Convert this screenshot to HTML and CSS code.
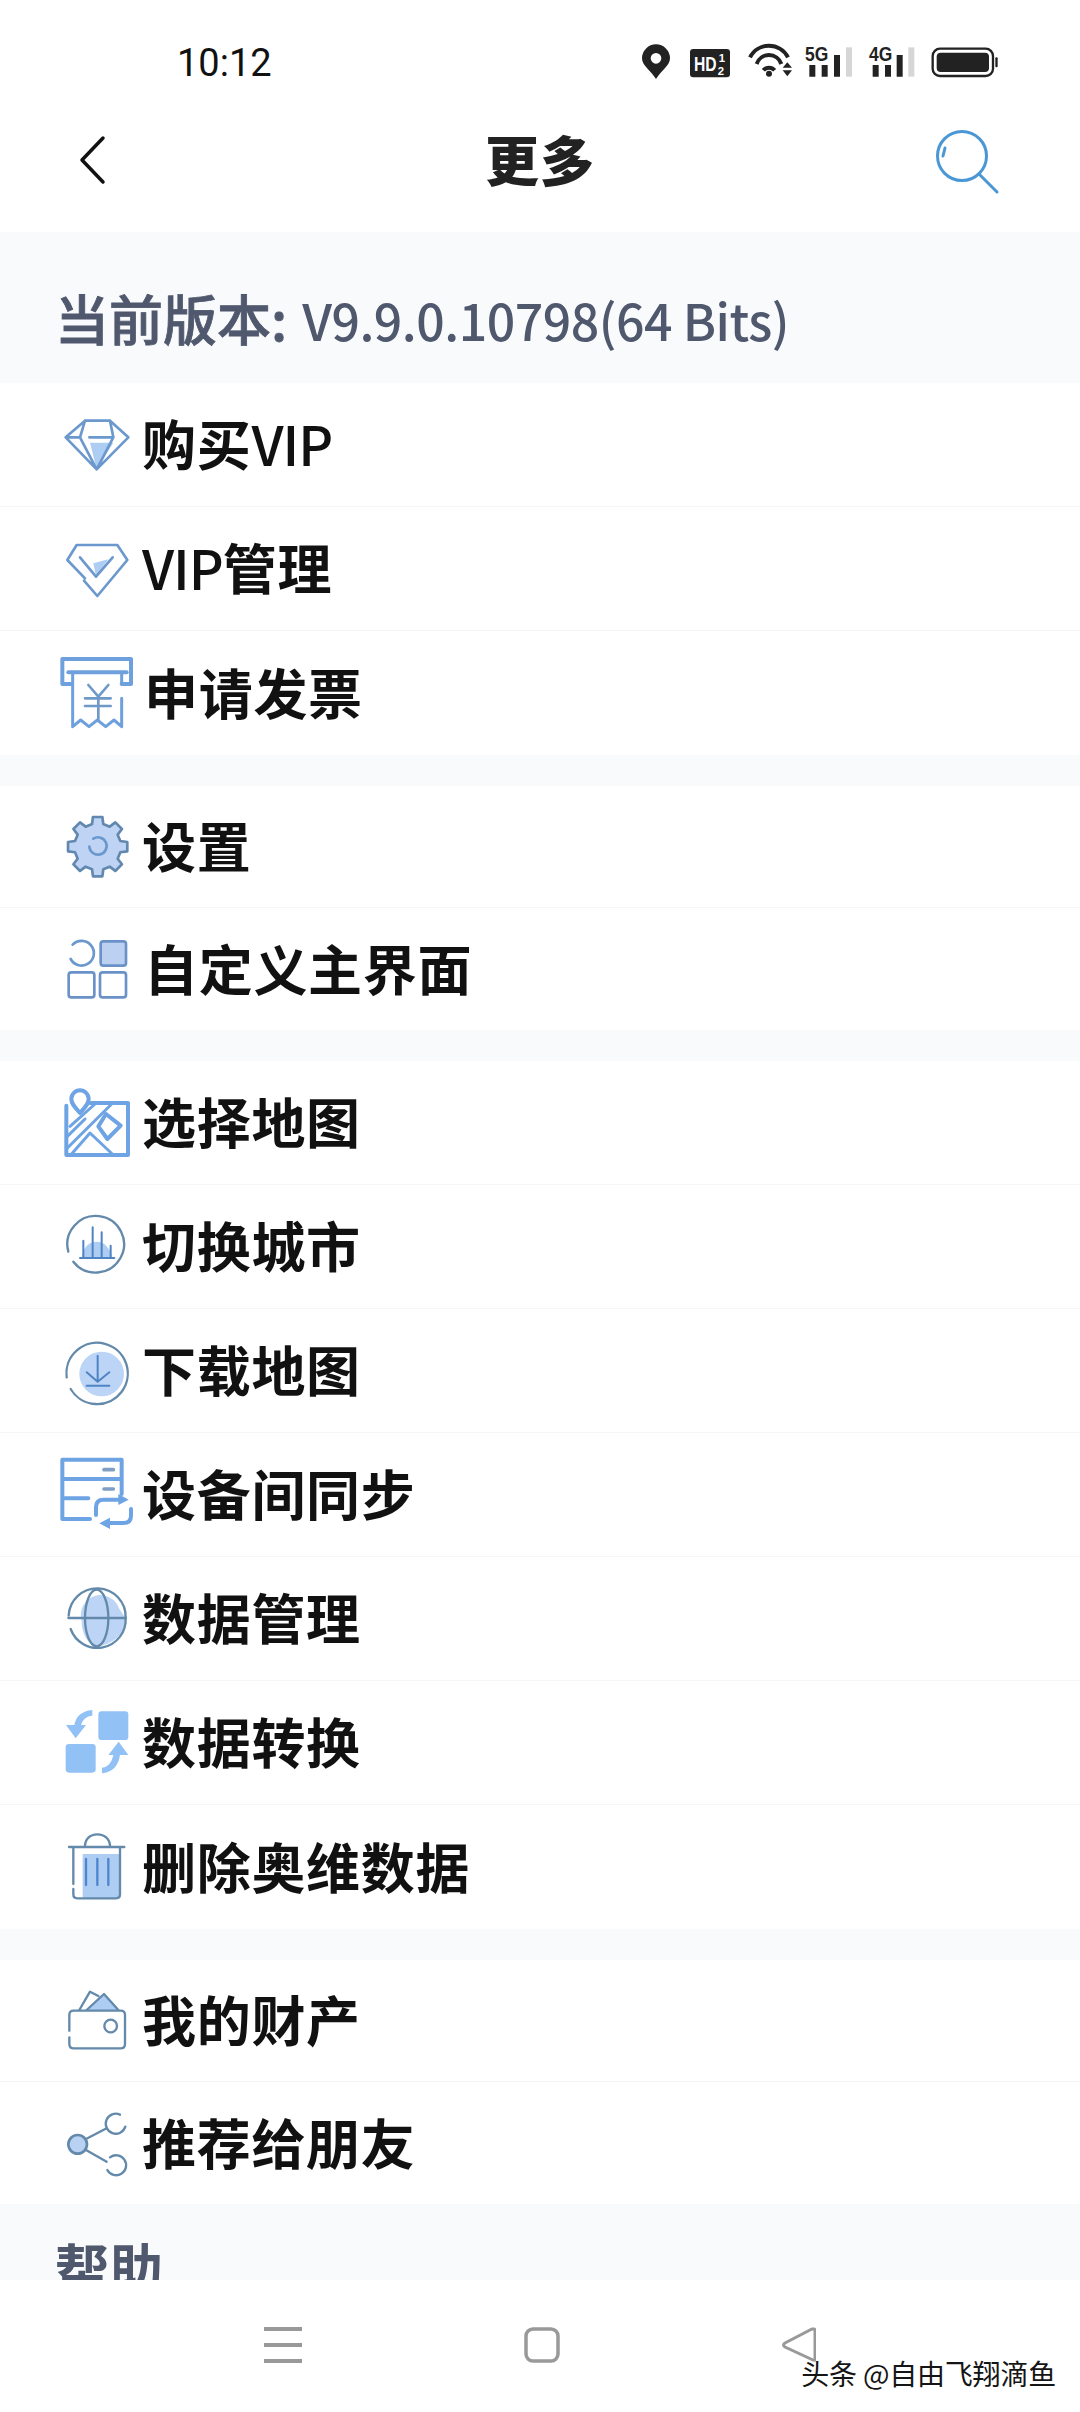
FILE: index.html
```html
<!DOCTYPE html>
<html lang="zh-CN">
<head>
<meta charset="utf-8">
<title>更多</title>
<link rel="stylesheet" href="styles.css">
</head>
<body>
<div class="page">
  <header class="top">
    <div class="status">
      <span class="time">10:12</span>
      <svg class="status-icons" viewBox="60 42 1080 120">
        <path class="k" fill-rule="evenodd" d="M108 150C90 122 66 110 66 88A42 42 0 0 1 150 88C150 110 126 122 108 150ZM108 72A16 16 0 1 0 108 104A16 16 0 1 0 108 72Z"/>
        <rect class="k" x="210" y="60" width="120" height="85" rx="10"/>
        <text class="hd" x="222" y="127" textLength="68" lengthAdjust="spacingAndGlyphs">HD</text>
        <text class="hd-s" x="296" y="98">1</text>
        <text class="hd-s" x="293" y="138">2</text>
        <path class="wf" d="M390 85A64 64 0 0 1 504 85M410 105A39 39 0 0 1 484 105M430 124A22 22 0 0 1 464 124"/>
        <circle class="k" cx="447" cy="134" r="9"/>
        <path class="k" d="M502 100L516 116H488ZM488 124H516L502 142Z"/>
        <text class="net" x="555" y="96" textLength="70" lengthAdjust="spacingAndGlyphs">5G</text>
        <path class="k" d="M568 108H586V143H568ZM605 108H623V143H605ZM642 78H660V143H642Z"/>
        <rect class="off" x="678" y="55" width="18" height="88"/>
        <text class="net" x="747" y="96" textLength="70" lengthAdjust="spacingAndGlyphs">4G</text>
        <path class="k" d="M758 108H776V143H758ZM795 108H813V143H795ZM830 78H848V143H830Z"/>
        <rect class="off" x="865" y="55" width="18" height="88"/>
        <rect class="batt" x="938" y="59" width="181" height="82" rx="22"/>
        <rect class="k" x="950" y="71" width="157" height="58" rx="12"/>
        <rect class="k" x="1126" y="85" width="7" height="30" rx="3"/>
      </svg>
    </div>
    <nav class="title-bar">
      <svg class="back" viewBox="0 0 28 50"><path d="M25 3L4 25L25 47"/></svg>
      <h1>更多</h1>
      <svg class="search" viewBox="0 0 68 68"><circle cx="28" cy="28" r="24.5"/><path d="M45 46L63 64M11 20L9 28"/></svg>
    </nav>
  </header>

  <main class="list">
    <div class="section-title version"><span class="cjk">当前版本:</span> <span class="lat">V9.9.0.10798(64 Bits)</span></div>
    <section class="group">
      <div class="row">
        <svg class="ic" viewBox="75 39 252 252">
          <path class="fa" d="M180 158H250L200 238Z"/>
          <path class="l" d="M165 92H240L295 142L200 238L107 142ZM165 92L150 142L200 238L250 142L240 92M178 142H245M107 142H150"/>
        </svg>
        <span>购买<b class="vip">VIP</b></span>
      </div>
      <div class="row">
        <svg class="ic" viewBox="75 411 252 252">
          <path class="fa" d="M190 520L235 508L198 558Z"/>
          <path class="l" d="M165 565L112 510L140 465H262L292 510L202 618L162 572M150 502L198 560L248 502"/>
        </svg>
        <span><b class="vip">VIP</b>管理</span>
      </div>
      <div class="row">
        <svg class="ic" viewBox="75 783 252 252">
          <path class="b" d="M97 882V807H303V882H275M97 882H122"/>
          <path class="b" d="M115 847H290"/>
          <path class="b thin" d="M128 850V1010L152 990L177 1010L202 990L227 1010L252 990L275 1010V925M275 850V880"/>
          <path class="y" d="M175 885L205 920L235 885M165 925H242M165 948H242M205 920V988"/>
        </svg>
        <span class="nudge">申请发票</span>
      </div>
    </section>
    <div class="gap"></div>
    <section class="group compact">
      <div class="row">
        <svg class="ic" viewBox="75 45 252 252">
          <polygon class="gear" transform="translate(203 170)" points="67.9,-16.9 88.9,-14.1 88.9,14.1 67.9,16.9 60,36.1 72.8,52.9 52.9,72.8 36.1,60 16.9,67.9 14.1,88.9 -14.1,88.9 -16.9,67.9 -36.1,60 -52.9,72.8 -72.8,52.9 -60,36.1 -67.9,16.9 -88.9,14.1 -88.9,-14.1 -67.9,-16.9 -60,-36.1 -72.8,-52.9 -52.9,-72.8 -36.1,-60 -16.9,-67.9 -14.1,-88.9 14.1,-88.9 16.9,-67.9 36.1,-60 52.9,-72.8 72.8,-52.9 60,-36.1"/>
          <path class="l" d="M190 146A26 26 0 1 1 178 170"/>
        </svg>
        <span>设置</span>
      </div>
      <div class="row">
        <svg class="ic" viewBox="75 414 252 252">
          <path class="l" d="M128 467A37 37 0 1 1 122 510"/>
          <rect class="fa l2" x="212" y="457" width="76" height="73" rx="8"/>
          <rect class="l2" x="116" y="550" width="77" height="75" rx="8"/>
          <rect class="l2" x="210" y="550" width="78" height="75" rx="8"/>
        </svg>
        <span class="nudge">自定义主界面</span>
      </div>
    </section>
    <div class="gap"></div>
    <section class="group">
      <div class="row">
        <svg class="ic" viewBox="75 36 252 252">
          <path class="m" d="M180 102H294V258H109V110"/>
          <path class="m thin" d="M109 205L165 150M109 240L245 105M122 258L180 192L250 258M195 105L120 172"/>
          <path class="m" fill="#c5d8f5" d="M228 135L272 170L232 210L205 172Z"/>
          <path class="m" fill="#c5d8f5" d="M150 132C135 115 124 105 124 90A26 26 0 0 1 176 90C176 105 165 115 150 132Z"/>
        </svg>
        <span>选择地图</span>
      </div>
      <div class="row">
        <svg class="ic" viewBox="75 408 252 252">
          <path class="fa" d="M155 567C160 530 180 518 200 518C222 518 240 535 247 567Z"/>
          <path class="s" d="M115 548A85 85 0 1 1 130 578"/>
          <path class="s2" d="M150 567H253M160 515V567M188 475V567M215 490V567M242 530V567"/>
        </svg>
        <span>切换城市</span>
      </div>
      <div class="row">
        <svg class="ic" viewBox="75 780 252 252">
          <circle class="fa2" cx="215" cy="915" r="67"/>
          <path class="s" d="M110 925A92 92 0 1 1 122 960"/>
          <path class="s2" d="M203 860V936M170 910L203 938L238 910M170 950H238"/>
        </svg>
        <span>下载地图</span>
      </div>
      <div class="row">
        <svg class="ic" viewBox="75 42 252 252">
          <path class="m" d="M180 240H97V62H275V165M97 120H275M97 178H175"/>
          <path class="d" d="M222 92H250M222 150H250"/>
          <path class="m" d="M198 228V205Q198 182 220 182H270M303 210V230Q303 252 280 252H230"/>
          <path class="ar" d="M265 165L296 182L265 198ZM240 236L208 253L240 270Z"/>
        </svg>
        <span>设备间同步</span>
      </div>
      <div class="row">
        <svg class="ic" viewBox="75 414 252 252">
          <path class="fa2" d="M155 545A58 58 0 0 1 268 510L287 537A85 85 0 0 1 200 620C180 620 155 590 155 545Z"/>
          <path class="s" d="M116 530A85 85 0 1 1 287 537A85 85 0 0 1 122 570"/>
          <path class="s" d="M115 537H287"/>
          <ellipse class="s" cx="200" cy="537" rx="35" ry="85"/>
        </svg>
        <span>数据管理</span>
      </div>
      <div class="row">
        <svg class="ic" viewBox="75 786 252 252">
          <rect class="sq" x="205" y="817" width="90" height="86" rx="10"/>
          <rect class="sq" x="107" y="915" width="90" height="86" rx="10"/>
          <path class="sq" d="M187 813V830Q160 832 153 858H168L137 898L108 858H133Q140 818 187 813Z"/>
          <path class="sq" d="M216 1003V986Q243 984 250 948H235L266 908L295 948H270Q263 998 216 1003Z"/>
        </svg>
        <span>数据转换</span>
      </div>
      <div class="row">
        <svg class="ic" viewBox="75 1158 252 252">
          <rect class="fa" x="158" y="1245" width="112" height="132"/>
          <path class="s" d="M117 1224H283M165 1222C165 1200 180 1186 202 1186C224 1186 240 1200 240 1222M130 1224V1335M130 1350V1366Q130 1378 142 1378H258Q270 1378 270 1366V1224"/>
          <path class="bars" d="M168 1260V1338M202 1260V1338M235 1260V1338"/>
        </svg>
        <span>删除奥维数据</span>
      </div>
    </section>
    <div class="gap"></div>
    <section class="group compact">
      <div class="row">
        <svg class="ic" viewBox="75 57 252 252">
          <path class="fa" d="M170 150L222 102L265 150Z"/>
          <path class="s" d="M148 150L180 95L205 108M170 150L222 102L265 150"/>
          <path class="s" d="M118 212V165Q118 152 131 152H272Q285 152 285 165V252Q285 265 272 265H131Q118 265 118 252V232"/>
          <circle class="s" cx="242" cy="198" r="19"/>
        </svg>
        <span>我的财产</span>
      </div>
      <div class="row">
        <svg class="ic" viewBox="75 423 252 252">
          <circle class="fa s" cx="143" cy="553" r="28"/>
          <path class="s" d="M168 537L230 505M168 570L230 605"/>
          <path class="s" d="M270 464A30 30 0 1 0 286 500"/>
          <path class="s" d="M240 592A30 30 0 1 1 232 630"/>
        </svg>
        <span>推荐给朋友</span>
      </div>
    </section>
    <div class="section-title help">帮助</div>
  </main>

  <footer class="nav">
    <svg class="nav-menu" viewBox="0 0 38 36"><path d="M0 2H38M0 18H38M0 34H38"/></svg>
    <svg class="nav-home" viewBox="0 0 36 36"><rect x="2" y="2" width="32" height="32" rx="7"/></svg>
    <svg class="nav-back" viewBox="0 0 34 36"><path d="M32 2Q33 2 33 4V32Q33 34 31 33L3 20Q0 18 3 16L30 2Z"/></svg>
    <span class="mark">头条 @自由飞翔滴鱼</span>
  </footer>
</div>
</body>
</html>
```

FILE: styles.css
```css
* { box-sizing: border-box; }
html, body { margin: 0; padding: 0; background: #fff; }
body { font-family: "Noto Sans CJK SC", "Noto Sans", sans-serif; }
.page { width: 1080px; height: 2412px; display: flex; flex-direction: column; position: relative; overflow: hidden; }

.top { height: 232px; flex: none; background: #fff; }
.status { height: 88px; padding: 38px 80px 0 177px; display: flex; justify-content: space-between; align-items: center; }
.time { font-family: Roboto, "Liberation Sans", sans-serif; font-size: 38px; color: #111; }
.status-icons { width: 360px; height: 40px; }
.k { fill: #222; }
.off { fill: #d6d6d6; }
.hd { font: 700 58px "Liberation Sans", sans-serif; fill: #fff; }
.hd-s { font: 700 34px "Liberation Sans", sans-serif; fill: #fff; }
.net { font: 700 58px "Liberation Sans", sans-serif; fill: #222; }
.wf { fill: none; stroke: #222; stroke-width: 12; }
.batt { fill: none; stroke: #222; stroke-width: 7; }

.title-bar { height: 144px; padding: 0 78px; display: grid; grid-template-columns: 1fr auto 1fr; align-items: center; }
.title-bar h1 { margin: 0 0 2px; font-size: 54px; font-weight: 900; color: #222; line-height: 1; letter-spacing: 1px; }
.back { width: 28px; height: 50px; fill: none; stroke: #111; stroke-width: 3.5; stroke-linecap: round; stroke-linejoin: round; }
.search { width: 68px; height: 68px; margin: 3px 0 0; justify-self: end; fill: none; stroke: #4a97d6; stroke-width: 3; stroke-linecap: round; }

.list { flex: 1; min-height: 0; overflow: hidden; background: #f9fafc; }
.section-title { font-size: 54px; color: #50586e; font-weight: 700; padding-left: 55px; line-height: 1; }
.version { height: 151px; padding-top: 59px; white-space: nowrap; font-weight: 500; }
.cjk { -webkit-text-stroke: 0.8px #50586e; }
.lat { font-weight: 500; font-size: 50px; letter-spacing: -0.5px; margin-left: 3px; }
.help { height: 76px; padding-top: 36px; }
.gap { height: 31px; }
.group { background: #fff; }
.row { height: 124px; display: flex; align-items: center; padding-left: 55px; border-bottom: 1px solid #f6f6f6; font-size: 54px; font-weight: 700; color: #111; letter-spacing: 0.7px; }
.compact .row { height: 122px; }
.row:last-child { border-bottom: 0; }
.row span { padding-bottom: 4px; }
.row .nudge { margin-left: 2px; }
.vip { font-weight: 500; letter-spacing: -1px; }
.ic { width: 84px; height: 84px; flex: none; margin-right: 3px; overflow: visible; }

.fa { fill: #aecdf3; }
.fa2 { fill: #bcd4f6; }
.l, .l2, .s, .s2, .y, .b, .m, .d, .bars, .gear { fill: none; stroke-linecap: round; stroke-linejoin: round; }
.l { stroke: #6b98cd; stroke-width: 8; }
.l2 { stroke: #6a92c9; stroke-width: 8; }
.fa.l2 { fill: #bcd0f2; }
.gear { fill: #bfd4f4; stroke: #6288b0; stroke-width: 8; }
.b { stroke: #6da0dd; stroke-width: 12; }
.b.thin { stroke-width: 9; }
.y { stroke: #6f99c8; stroke-width: 8; }
.m { stroke: #6ea3e4; stroke-width: 12; }
.m.thin { stroke-width: 9; }
.s { fill: none; stroke: #6389ab; stroke-width: 7; }
.s.fa { fill: #b9d1f3; stroke-width: 8; }
.s2 { stroke: #4f84c4; stroke-width: 6; }
.d { stroke: #7f9fc4; stroke-width: 11; }
.ar { fill: #6ea3e4; }
.sq { fill: #92c1f5; }
.bars { stroke: #4f86cf; stroke-width: 7; }

.nav { height: 132px; flex: none; background: #fff; display: flex; justify-content: center; align-items: flex-start; gap: 222px; padding-top: 47px; position: relative; }
.nav svg { display: block; }
.nav-menu { width: 38px; height: 36px; fill: none; stroke: #999; stroke-width: 4; }
.nav-home { width: 36px; height: 36px; fill: none; stroke: #999; stroke-width: 3.5; }
.nav-back { width: 34px; height: 36px; fill: none; stroke: #999; stroke-width: 3; }
.mark { position: absolute; right: 24px; top: 75px; font-size: 28px; line-height: 36px; color: #151515; text-shadow: 1px 0 0 #fff; white-space: nowrap; letter-spacing: -0.2px; }
```
